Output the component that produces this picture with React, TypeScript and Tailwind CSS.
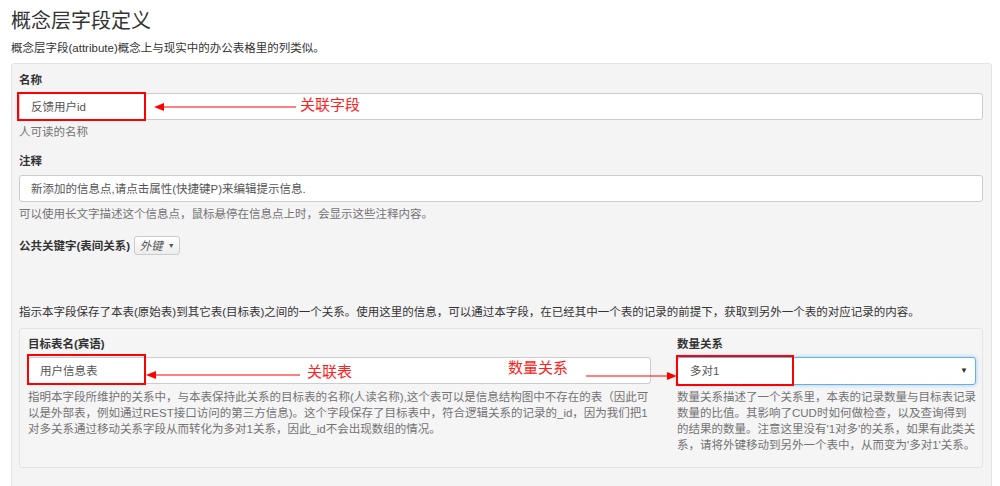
import React from "react";

const font = { fontFamily: '"Liberation Sans", "Noto Sans CJK SC", sans-serif' };

function ArrowLeft({ width }: { width: number }) {
  return (
    <svg width={width} height="10" viewBox={`0 0 ${width} 10`} className="block">
      <polygon points="0,5 10,1 10,9" fill="#ff0000" />
      <line x1="8" y1="5" x2={width} y2="5" stroke="#ff0000" strokeWidth="1" />
    </svg>
  );
}

function ArrowRight({ width }: { width: number }) {
  return (
    <svg width={width} height="10" viewBox={`0 0 ${width} 10`} className="block">
      <line x1="0" y1="5" x2={width - 8} y2="5" stroke="#ff0000" strokeWidth="1" />
      <polygon points={`${width},5 ${width - 10},1 ${width - 10},9`} fill="#ff0000" />
    </svg>
  );
}

export default function App() {
  return (
    <div className="relative w-[1000px] h-[486px] overflow-hidden bg-white text-[11.5px] leading-[16px] text-[#333]" style={font}>
      <div className="pl-[11px] pt-[8px]">
        <h1 className="text-[20px] leading-[26px] text-[#333]">概念层字段定义</h1>
        <p className="mt-[6px] leading-[16px]">概念层字段(attribute)概念上与现实中的办公表格里的列类似。</p>
      </div>

      <div className="mt-[7px] ml-[11px] w-[981px] h-[440px] border border-[#e3e3e3] rounded-[3px] bg-[#f4f4f4] px-[7px] pt-[8px]">
        <div className="font-bold leading-[16px]">名称</div>
        <div className="relative mt-[5px]">
          <div className="h-[27px] w-[964px] border border-[#ccc] rounded-[3px] bg-white flex items-center pl-[11px] text-[#555]">
            反馈用户id
          </div>
          <div className="absolute left-[-2px] top-[-1px] w-[129px] h-[29px] border-2 border-[#ff0000]" />
          <div className="absolute left-[135px] top-[6px] flex items-center gap-[4px]">
            <ArrowLeft width={142} />
            <span className="text-[15px] leading-[20px] text-[#ff2020] -mt-[4px]">关联字段</span>
          </div>
        </div>
        <div className="mt-[4px] text-[#737373]">人可读的名称</div>

        <div className="mt-[13px] font-bold">注释</div>
        <div className="mt-[6px] h-[27px] w-[964px] border border-[#ccc] rounded-[3px] bg-white flex items-center pl-[11px] text-[#555]">
          新添加的信息点,请点击属性(快捷键P)来编辑提示信息.
        </div>
        <div className="mt-[4px] text-[#737373]">可以使用长文字描述这个信息点，鼠标悬停在信息点上时，会显示这些注释内容。</div>

        <div className="mt-[14px] flex items-center gap-[4px]">
          <span className="font-bold">公共关键字(表间关系)</span>
          <span className="h-[19px] w-[46px] border border-[#ccc] rounded-[3px] bg-gradient-to-b from-white to-[#ececec] flex items-center justify-center gap-[5px] text-[#555]">
            <span className="italic">外键</span>
            <span className="text-[7px] leading-none">▼</span>
          </span>
        </div>

        <p className="mt-[49px]">指示本字段保存了本表(原始表)到其它表(目标表)之间的一个关系。使用这里的信息，可以通过本字段，在已经其中一个表的记录的前提下，获取到另外一个表的对应记录的内容。</p>

        <div className="mt-[8px] w-[964px] h-[140px] border border-[#e3e3e3] rounded-[3px] bg-[#f5f5f5] pl-[8px] pt-[7px] flex gap-[26px]">
          <div className="w-[623px]">
            <div className="font-bold">目标表名(宾语)</div>
            <div className="relative mt-[5px]">
              <div className="h-[27px] border border-[#ccc] rounded-[3px] bg-white flex items-center pl-[11px] text-[#555]">
                用户信息表
              </div>
              <div className="absolute left-[-1px] top-[-3px] w-[119px] h-[31px] border-2 border-[#ff0000]" />
              <div className="absolute left-[118px] top-[13px]"><ArrowLeft width={154} /></div>
              <span className="absolute left-[279px] top-[5px] text-[15px] leading-[20px] text-[#ff2020]">关联表</span>
              <span className="absolute left-[480px] top-[1px] text-[15px] leading-[20px] text-[#ff2020]">数量关系</span>
              <div className="absolute left-[558px] top-[14px]"><ArrowRight width={91} /></div>
            </div>
            <p className="mt-[5px] text-[#737373]">
              指明本字段所维护的关系中，与本表保持此关系的目标表的名称(人读名称),这个表可以是信息结构图中不存在的表（因此可以是外部表，例如通过REST接口访问的第三方信息)。这个字段保存了目标表中，符合逻辑关系的记录的_id，因为我们把1对多关系通过移动关系字段从而转化为多对1关系，因此_id不会出现数组的情况。
            </p>
          </div>
          <div className="w-[299px]">
            <div className="font-bold">数量关系</div>
            <div className="relative mt-[5px]">
              <div className="h-[28px] border border-[#66afe9] rounded-[3px] bg-white flex items-center justify-between pl-[12px] pr-[7px] text-[#555] shadow-[0_0_4px_rgba(102,175,233,0.6)]">
                <span>多对1</span>
                <span className="text-[8px] leading-none text-[#333]">▼</span>
              </div>
              <div className="absolute left-[-1px] top-[-2px] w-[118px] h-[31px] border-2 border-[#ff0000]" />
            </div>
            <p className="mt-[4px] text-[#737373]">
              数量关系描述了一个关系里，本表的记录数量与目标表记录数量的比值。其影响了CUD时如何做检查，以及查询得到的结果的数量。注意这里没有'1对多'的关系，如果有此类关系，请将外键移动到另外一个表中，从而变为'多对1'关系。
            </p>
          </div>
        </div>
      </div>
    </div>
  );
}
